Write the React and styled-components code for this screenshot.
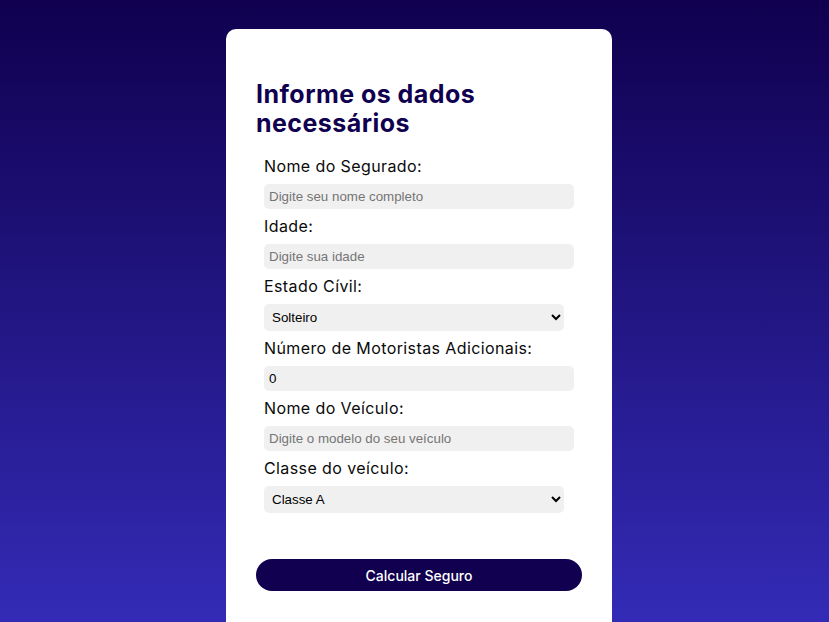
import styled, {createGlobalStyle} from "styled-components";
import {useState} from "react";

const GlobalStyle = createGlobalStyle`
  html, body {
    margin: 0;
    height: 100%;
    overflow: hidden;
  }
  body {
    font-family: 'Inter', 'Open Sans', sans-serif;
    background: linear-gradient(180deg, #10004f 0%, #332bb6 100%);
  }
`

const Page = styled.div`
  height: 100vh;
  display: flex;
  justify-content: center;
  align-items: flex-start;
  padding: 29px 0 0 9px;
  box-sizing: border-box;
`

const Card = styled.form`
  width: 386px;
  background-color: #fff;
  border-radius: 10px;
  padding: 51px 30px 60px;
  box-sizing: border-box;
  h1{
    margin: 0 0 18px;
    color: #10004f;
    font-size: 25px;
    line-height: 29px;
    font-weight: 700;
    letter-spacing: 0.45px;
  }
`

const Field = styled.div`
  padding-left: 8px;
  display: flex;
  flex-direction: column;
  align-items: flex-start;
  margin-bottom: 7px;
`

const Label = styled.label`
  font-size: 16px;
  line-height: 20px;
  color: #0a0a0a;
  margin-bottom: 8px;
  letter-spacing: 0.4px;
`

const Input = styled.input`
  width: 310px;
  height: 25px;
  box-sizing: border-box;
  border: none;
  border-radius: 5px;
  background-color: #f0f0f0;
  padding: 0 5px;
  font-family: 'Liberation Sans', Arial, sans-serif;
  font-size: 13.33px;
  color: #000;
  outline: none;
  &::placeholder{
    color: #757575;
  }
`

const Select = styled.select`
  width: 300px;
  height: 27px;
  box-sizing: border-box;
  border: none;
  border-radius: 5px;
  background-color: #f0f0f0;
  padding: 0 4px;
  font-family: 'Liberation Sans', Arial, sans-serif;
  font-size: 13.33px;
  color: #000;
  outline: none;
`

const Button = styled.button`
  width: 326px;
  height: 32px;
  margin-top: 39px;
  border: none;
  border-radius: 16px;
  background-color: #10004f;
  color: #fff;
  font-family: 'Inter', 'Open Sans', sans-serif;
  font-size: 14px;
  font-weight: 500;
  cursor: pointer;
`

const App = ()=>{
    const [form,setForm] = useState({nome:'', idade:'', estado:'solteiro', motoristas:0, veiculo:'', classe:'A'})
    const change = (key)=>(e)=>setForm({...form, [key]: e.target.value})

    return(
        <Page>
            <GlobalStyle/>
            <Card onSubmit={(e)=>e.preventDefault()}>
                <h1>Informe os dados necessários</h1>
                <Field>
                    <Label>Nome do Segurado:</Label>
                    <Input placeholder={'Digite seu nome completo'} value={form.nome} onChange={change('nome')}/>
                </Field>
                <Field>
                    <Label>Idade:</Label>
                    <Input placeholder={'Digite sua idade'} value={form.idade} onChange={change('idade')}/>
                </Field>
                <Field>
                    <Label>Estado Cívil:</Label>
                    <Select value={form.estado} onChange={change('estado')}>
                        <option value={'solteiro'}>Solteiro</option>
                        <option value={'casado'}>Casado</option>
                    </Select>
                </Field>
                <Field>
                    <Label>Número de Motoristas Adicionais:</Label>
                    <Input type={'number'} value={form.motoristas} onChange={change('motoristas')}/>
                </Field>
                <Field>
                    <Label>Nome do Veículo:</Label>
                    <Input placeholder={'Digite o modelo do seu veículo'} value={form.veiculo} onChange={change('veiculo')}/>
                </Field>
                <Field>
                    <Label>Classe do veículo:</Label>
                    <Select value={form.classe} onChange={change('classe')}>
                        <option value={'A'}>Classe A</option>
                        <option value={'B'}>Classe B</option>
                        <option value={'C'}>Classe C</option>
                    </Select>
                </Field>
                <Button type={'submit'}>Calcular Seguro</Button>
            </Card>
        </Page>
    )
}

export default App
